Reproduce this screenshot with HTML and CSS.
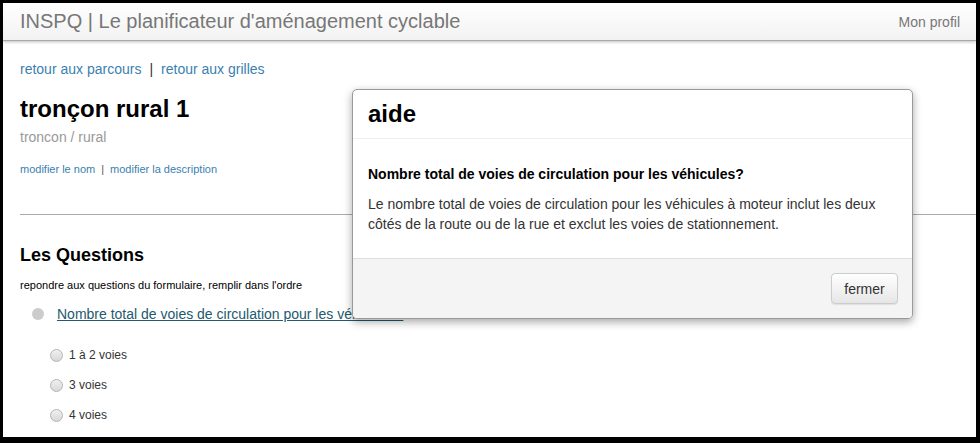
FILE: index.html
```html
<!DOCTYPE html>
<html lang="fr">
<head>
<meta charset="utf-8">
<title>INSPQ</title>
<link rel="stylesheet" href="styles.css">
</head>
<body>
<div class="frame">
  <header class="navbar">
    <span class="brand">INSPQ | Le planificateur d'aménagement cyclable</span>
    <a class="profile" href="#">Mon profil</a>
  </header>
  <main class="content">
    <nav class="crumbs"><a href="#">retour aux parcours</a><span class="sep">|</span><a href="#">retour aux grilles</a></nav>
    <h1 class="title">tronçon rural 1</h1>
    <div class="subtitle">troncon / rural</div>
    <div class="edit-links"><a href="#">modifier le nom</a><span class="sep">|</span><a href="#">modifier la description</a></div>
    <hr class="divider">
    <h2 class="section">Les Questions</h2>
    <p class="hint">repondre aux questions du formulaire, remplir dans l'ordre</p>
    <div class="question"><span class="dot"></span><a href="#" class="qlink">Nombre total de voies de circulation pour les véhicules?</a></div>
    <ul class="options">
      <li><span class="radio"></span>1 à 2 voies</li>
      <li><span class="radio"></span>3 voies</li>
      <li><span class="radio"></span>4 voies</li>
    </ul>
  </main>
  <div class="modal">
    <div class="modal-header"><h3>aide</h3></div>
    <div class="modal-body">
      <p class="q">Nombre total de voies de circulation pour les véhicules?</p>
      <p class="desc">Le nombre total de voies de circulation pour les véhicules à moteur inclut les deux côtés de la route ou de la rue et exclut les voies de stationnement.</p>
    </div>
    <div class="modal-footer"><button class="btn">fermer</button></div>
  </div>
</div>
</body>
</html>
```
FILE: styles.css
```css
html, body {
  margin: 0;
  padding: 0;
  background: #000;
  height: 100%;
  overflow: hidden;
}
body {
  font-family: "Liberation Sans", Arial, sans-serif;
  color: #333;
}
.frame {
  position: relative;
  margin: 3px 4px 0 3px;
  height: 434px;
  background: #fff;
  overflow: hidden;
}
a { color: #3a7fb0; text-decoration: none; }
.navbar {
  height: 37px;
  display: flex;
  align-items: center;
  justify-content: space-between;
  padding: 0 16px 0 17px;
  background: linear-gradient(#ffffff, #f2f2f2);
  border-bottom: 1px solid #a8a8a8;
  box-shadow: 0 1px 3px rgba(0,0,0,0.25);
}
.brand { font-size: 20px; color: #777; }
.profile { font-size: 14px; color: #777; }
.content { padding: 18px 0 0 17px; }
.crumbs { font-size: 14px; line-height: 20px; }
.sep { color: #333; margin: 0 8px; }
.crumbs .sep { margin: 0 8px; }
.title {
  font-size: 24px;
  font-weight: bold;
  color: #000;
  margin: 16px 0 0 0;
  line-height: 28px;
}
.subtitle { font-size: 14px; color: #999; margin-top: 5px; line-height: 18px; }
.edit-links { font-size: 11px; margin-top: 16px; line-height: 14px; }
.edit-links .sep { margin: 0 6px; color: #555; }
.divider {
  border: 0;
  border-top: 1px solid #aaa;
  margin: 38px 0 0 0;
}
.section {
  font-size: 18px;
  font-weight: bold;
  color: #000;
  margin: 29px 0 0 0;
  line-height: 22px;
}
.hint { font-size: 11px; color: #000; margin: 12px 0 0 0; line-height: 14px; }
.question {
  display: flex;
  align-items: center;
  margin: 13px 0 0 12px;
  line-height: 18px;
}
.dot {
  width: 12px; height: 12px;
  border-radius: 50%;
  background: #ccc;
  margin-right: 13px;
}
.qlink { font-size: 14px; color: #235a6e; text-decoration: underline; }
.options { list-style: none; margin: 17px 0 0 0; padding: 0 0 0 30px; }
.options li {
  display: flex;
  align-items: center;
  font-size: 12px;
  color: #333;
  height: 30px;
}
.radio {
  width: 11px; height: 11px;
  border-radius: 50%;
  border: 1px solid #b5b5b5;
  background: linear-gradient(#f0f0f0, #d8d8d8);
  margin-right: 6px;
}
.modal {
  position: absolute;
  left: 349px;
  top: 86px;
  width: 559px;
  background: #fff;
  border: 1px solid #999;
  border-radius: 5px;
  box-shadow: 0 3px 8px rgba(0,0,0,0.35);
  overflow: hidden;
}
.modal-header {
  padding: 0 15px;
  height: 48px;
  display: flex;
  align-items: center;
  border-bottom: 1px solid #eee;
}
.modal-header h3 { margin: 0; font-size: 24px; font-weight: bold; color: #000; }
.modal-body { padding: 27px 15px 24px 15px; }
.modal-body .q { margin: 0; font-size: 14px; font-weight: bold; color: #000; line-height: 17px; }
.modal-body .desc { margin: 11px 0 0 0; font-size: 14px; line-height: 20px; color: #333; }
.modal-footer {
  background: #f4f4f4;
  border-top: 1px solid #ddd;
  height: 59px;
  display: flex;
  align-items: center;
  justify-content: flex-end;
  padding: 0 14px;
}
.btn {
  font-family: "Liberation Sans", Arial, sans-serif;
  font-size: 14px;
  color: #333;
  width: 67px;
  height: 31px;
  border: 1px solid #ccc;
  border-radius: 4px;
  background: linear-gradient(#fff, #e6e6e6);
  box-shadow: 0 1px 1px rgba(0,0,0,0.08);
}
```
